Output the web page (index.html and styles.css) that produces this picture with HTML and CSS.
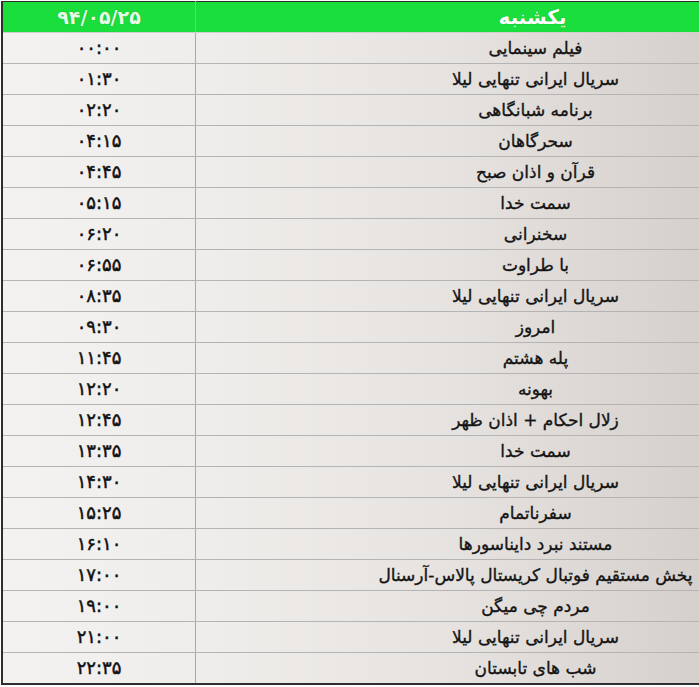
FILE: index.html
```html
<!DOCTYPE html>
<html lang="fa">
<head>
<meta charset="utf-8">
<link rel="stylesheet" href="styles.css">
</head>
<body>
<div class="frame">
<table class="schedule" dir="rtl">
<thead>
<tr><th class="name">یکشنبه</th><th class="time">۹۴/۰۵/۲۵</th></tr>
</thead>
<tbody>
<tr><td class="name">فیلم سینمایی</td><td class="time">۰۰:۰۰</td></tr>
<tr><td class="name">سریال ایرانی تنهایی لیلا</td><td class="time">۰۱:۳۰</td></tr>
<tr><td class="name">برنامه شبانگاهی</td><td class="time">۰۲:۲۰</td></tr>
<tr><td class="name">سحرگاهان</td><td class="time">۰۴:۱۵</td></tr>
<tr><td class="name">قرآن و اذان صبح</td><td class="time">۰۴:۴۵</td></tr>
<tr><td class="name">سمت خدا</td><td class="time">۰۵:۱۵</td></tr>
<tr><td class="name">سخنرانی</td><td class="time">۰۶:۲۰</td></tr>
<tr><td class="name">با طراوت</td><td class="time">۰۶:۵۵</td></tr>
<tr><td class="name">سریال ایرانی تنهایی لیلا</td><td class="time">۰۸:۳۵</td></tr>
<tr><td class="name">امروز</td><td class="time">۰۹:۳۰</td></tr>
<tr><td class="name">پله هشتم</td><td class="time">۱۱:۴۵</td></tr>
<tr><td class="name">بهونه</td><td class="time">۱۲:۲۰</td></tr>
<tr><td class="name">زلال احکام + اذان ظهر</td><td class="time">۱۲:۴۵</td></tr>
<tr><td class="name">سمت خدا</td><td class="time">۱۳:۳۵</td></tr>
<tr><td class="name">سریال ایرانی تنهایی لیلا</td><td class="time">۱۴:۳۰</td></tr>
<tr><td class="name">سفرناتمام</td><td class="time">۱۵:۲۵</td></tr>
<tr><td class="name">مستند نبرد دایناسورها</td><td class="time">۱۶:۱۰</td></tr>
<tr><td class="name">پخش مستقیم فوتبال کریستال پالاس-آرسنال</td><td class="time">۱۷:۰۰</td></tr>
<tr><td class="name">مردم چی میگن</td><td class="time">۱۹:۰۰</td></tr>
<tr><td class="name">سریال ایرانی تنهایی لیلا</td><td class="time">۲۱:۰۰</td></tr>
<tr><td class="name">شب های تابستان</td><td class="time">۲۲:۳۵</td></tr>
</tbody>
</table>
</div>
</body>
</html>
```
FILE: styles.css
```css
html, body {
  margin: 0;
  padding: 0;
  background: #ffffff;
  overflow: hidden;
}
.frame {
  width: 699px;
  height: 687px;
  overflow: hidden;
  padding: 1px 0 0 1px;
  box-sizing: border-box;
}
.schedule {
  width: 860px;
  border-collapse: collapse;
  table-layout: fixed;
  border: 2px solid #2e2e2e;
  border-top-width: 1px;
  background: linear-gradient(to right, #f4f2f0 0px, #efedeb 200px, #e6e2df 450px, #d5d0cc 698px, #d0cbc7 860px);
  font-family: "DejaVu Sans", "Noto Sans", sans-serif;
}
.schedule th,
.schedule td {
  height: 30px;
  padding: 0;
  text-align: center;
  vertical-align: middle;
  border-bottom: 1px solid #b4b4b4;
  white-space: nowrap;
  overflow: hidden;
  line-height: 30px;
}
.schedule thead th {
  background: #19de3b;
  color: #ffffff;
  font-weight: bold;
  font-size: 20px;
  border-bottom: 1px solid #cfcfcf;
  text-shadow: 0 0 1px rgba(0, 80, 0, 0.4);
}
.schedule thead th.name {
  padding-left: 10px;
}
.schedule thead th.time {
  color: #e6fbe6;
  font-size: 19px;
}
.schedule td.name {
  font-size: 17px;
  color: #141414;
  padding-left: 16px;
  -webkit-text-stroke: 0.35px #141414;
}
.schedule .time {
  width: 192px;
  border-right: 1px solid #a9a9a9;
}
.schedule td.time {
  font-size: 18px;
  font-weight: normal;
  color: #111111;
  -webkit-text-stroke: 0.5px #111111;
}
.schedule tbody tr:last-child td {
  border-bottom: none;
}
```
